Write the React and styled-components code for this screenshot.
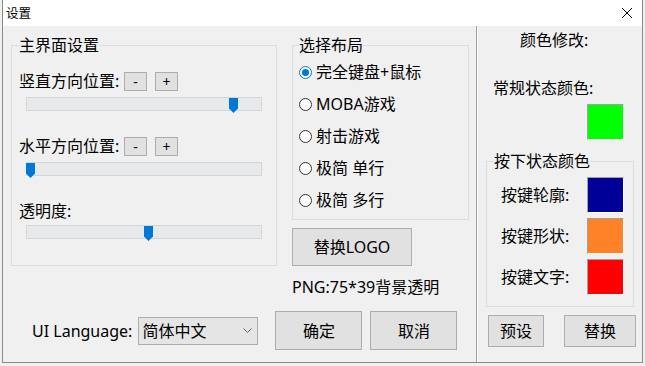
import React from 'react';
import styled, { createGlobalStyle } from 'styled-components';

const FONT = `"Noto Sans", "Noto Sans CJK SC", sans-serif`;

const Global = createGlobalStyle`
  html, body { margin: 0; padding: 0; background: #f0f0f0; }
  body { font-family: ${FONT}; color: #000; }
  * { box-sizing: border-box; }
`;

const Window = styled.div`
  margin-left: 2px;
  width: 641px;
  height: 363px;
  border: 1px solid #8a8a8a;
  border-top: none;
  display: flex;
  flex-direction: column;
  background: #f0f0f0;
`;

const TitleBar = styled.div`
  height: 26px;
  flex: none;
  background: #fff;
  display: flex;
  align-items: center;
  justify-content: space-between;
  padding: 0 9px 0 3px;
`;

const Title = styled.span`
  font-size: 12.5px;
  line-height: 16px;
  font-family: "Noto Sans CJK SC", sans-serif;
`;

const Body = styled.div`
  flex: 1;
  display: flex;
`;

const LeftArea = styled.div`
  width: 473px;
  flex: none;
  display: flex;
  flex-direction: column;
  padding: 9px 0 0 8px;
`;

const TopRow = styled.div`
  display: flex;
  gap: 15px;
  align-items: flex-start;
`;

const Group = styled.fieldset`
  margin: 0;
  min-width: 0;
  border: 1px solid #dcdcdc;
  padding: 0 ${(p) => p.$pl}px;
  width: ${(p) => p.$w}px;
  height: ${(p) => p.$h}px;
  display: flex;
  flex-direction: column;
  align-items: flex-start;
`;

const Legend = styled.legend`
  padding: 0;
  font-size: 16px;
  line-height: 20px;
`;

const Text = styled.span`
  font-size: 16px;
  line-height: 20px;
  white-space: nowrap;
`;

const PosRow = styled.div`
  display: flex;
  align-items: center;
  height: 20px;
  margin-top: ${(p) => p.$mt}px;
`;

const PosLabel = styled(Text)`
  width: 105px;
`;

const SmallBtn = styled.button`
  width: 23px;
  height: 19px;
  margin: 0 8px 0 0;
  padding: 0;
  border: 1px solid #adadad;
  background: #e1e1e1;
  font-family: ${FONT};
  font-size: 14px;
  line-height: 15px;
  color: #000;
`;

const Track = styled.div`
  position: relative;
  margin: ${(p) => p.$mt}px 0 0 7px;
  width: 236px;
  height: 14px;
  border: 1px solid #d6d6d6;
  background: #e7eaea;
`;

const ThumbSvg = styled.svg`
  position: absolute;
  top: 0;
  display: block;
`;

const Slider = ({ value, mt }) => (
  <Track $mt={mt}>
    <ThumbSvg width="9" height="15" viewBox="0 0 9 15" style={{ left: Math.round(-1 + (value / 100) * 226) }}>
      <path d="M0 0 H9 V10.5 L4.5 15 L0 10.5 Z" fill="#0078d7" />
    </ThumbSvg>
  </Track>
);

const MidCol = styled.div`
  display: flex;
  flex-direction: column;
  align-items: flex-start;
`;

const RadioRow = styled.label`
  display: flex;
  align-items: center;
  height: 32px;
  margin-top: ${(p) => (p.$first ? 1 : 0)}px;
`;

const RadioCircle = styled.span`
  width: 13px;
  height: 13px;
  border-radius: 50%;
  border: 1px solid ${(p) => (p.$on ? '#0078d7' : '#333')};
  background: #fff;
  margin-right: 4px;
  display: flex;
  align-items: center;
  justify-content: center;
  flex: none;
  &::after {
    content: '';
    width: 7px;
    height: 7px;
    border-radius: 50%;
    background: ${(p) => (p.$on ? '#0078d7' : 'transparent')};
  }
`;

const Button = styled.button`
  width: ${(p) => p.$w}px;
  height: ${(p) => p.$h}px;
  margin: ${(p) => p.$m || '0'};
  padding: 0;
  border: 1px solid #adadad;
  background: #e1e1e1;
  font-family: ${FONT};
  font-size: 16px;
  line-height: 20px;
  color: #000;
  flex: none;
`;

const PngText = styled(Text)`
  margin-top: 11px;
`;

const BottomRow = styled.div`
  display: flex;
  align-items: center;
  margin: 14px 0 0 21px;
`;

const Combo = styled.div`
  width: 120px;
  height: 28px;
  margin-left: 6px;
  margin-right: 17px;
  border: 1px solid #adadad;
  background: #e5e5e5;
  display: flex;
  align-items: center;
  justify-content: space-between;
  padding: 0 5px 0 3px;
`;

const Side = styled.div`
  flex: 1;
  border-left: 1px solid #a0a0a0;
  box-shadow: inset 1px 0 #ffffff;
  display: flex;
  flex-direction: column;
  align-items: flex-start;
  padding: 4px 0 0 9px;
`;

const SideText = styled(Text)`
  margin: ${(p) => p.$m};
`;

const Swatch = styled.div`
  width: 37px;
  height: 36px;
  background: ${(p) => p.$c};
  border-top: 1px solid #a0a0a0;
  border-left: 1px solid #a0a0a0;
  border-right: 1px solid #ffffff;
  border-bottom: 1px solid #ffffff;
  margin: ${(p) => p.$m || '0'};
  flex: none;
`;

const ColorRow = styled.div`
  width: 100%;
  display: flex;
  align-items: center;
  justify-content: space-between;
  padding: 0 2px 0 7px;
  margin-top: ${(p) => p.$mt}px;
`;

const SideButtons = styled.div`
  display: flex;
  gap: 20px;
  margin: 8px 0 0 2px;
`;

const radios = ['完全键盘+鼠标', 'MOBA游戏', '射击游戏', '极简 单行', '极简 多行'];
const colors = [
  ['按键轮廓:', '#000099', 6],
  ['按键形状:', '#ff8228', 6],
  ['按键文字:', '#ff0000', 6],
];

export default function App() {
  return (
    <>
      <Global />
      <Window>
        <TitleBar>
          <Title>设置</Title>
          <svg width="12" height="12" viewBox="0 0 12 12">
            <path d="M1 1 L11 11 M11 1 L1 11" stroke="#000" strokeWidth="1" />
          </svg>
        </TitleBar>
        <Body>
          <LeftArea>
            <TopRow>
              <Group $w={266} $h={231} $pl={7}>
                <Legend>主界面设置</Legend>
                <PosRow $mt={16}>
                  <PosLabel>竖直方向位置:</PosLabel>
                  <SmallBtn>-</SmallBtn>
                  <SmallBtn>+</SmallBtn>
                </PosRow>
                <Slider value={90} mt={6} />
                <PosRow $mt={25}>
                  <PosLabel>水平方向位置:</PosLabel>
                  <SmallBtn>-</SmallBtn>
                  <SmallBtn>+</SmallBtn>
                </PosRow>
                <Slider value={0} mt={6} />
                <PosRow $mt={25}>
                  <Text>透明度:</Text>
                </PosRow>
                <Slider value={52} mt={4} />
              </Group>
              <MidCol>
                <Group $w={177} $h={185} $pl={6}>
                  <Legend>选择布局</Legend>
                  {radios.map((r, i) => (
                    <RadioRow key={r} $first={i === 0}>
                      <RadioCircle $on={i === 0} />
                      <Text>{r}</Text>
                    </RadioRow>
                  ))}
                </Group>
                <Button $w={120} $h={38} $m="8px 0 0 0">替换LOGO</Button>
                <PngText>PNG:75*39背景透明</PngText>
              </MidCol>
            </TopRow>
            <BottomRow>
              <Text>UI Language:</Text>
              <Combo>
                <Text>简体中文</Text>
                <svg width="9" height="6" viewBox="0 0 9 6">
                  <path d="M0.5 0.5 L4.5 4.5 L8.5 0.5" stroke="#606060" fill="none" strokeWidth="1" />
                </svg>
              </Combo>
              <Button $w={87} $h={39}>确定</Button>
              <Button $w={87} $h={39} $m="0 0 0 8px">取消</Button>
            </BottomRow>
          </LeftArea>
          <Side>
            <SideText $m="0 0 0 34px">颜色修改:</SideText>
            <SideText $m="28px 0 0 7px">常规状态颜色:</SideText>
            <Swatch $c="#00ff00" $m="6px 0 0 101px" />
            <Group $w={148} $h={156} $pl={7} style={{ marginTop: 11 }}>
              <Legend>按下状态颜色</Legend>
              {colors.map(([label, c, mt], i) => (
                <ColorRow key={label} $mt={i === 0 ? 6 : 5}>
                  <Text>{label}</Text>
                  <Swatch $c={c} />
                </ColorRow>
              ))}
            </Group>
            <SideButtons>
              <Button $w={56} $h={32}>预设</Button>
              <Button $w={72} $h={32}>替换</Button>
            </SideButtons>
          </Side>
        </Body>
      </Window>
    </>
  );
}
